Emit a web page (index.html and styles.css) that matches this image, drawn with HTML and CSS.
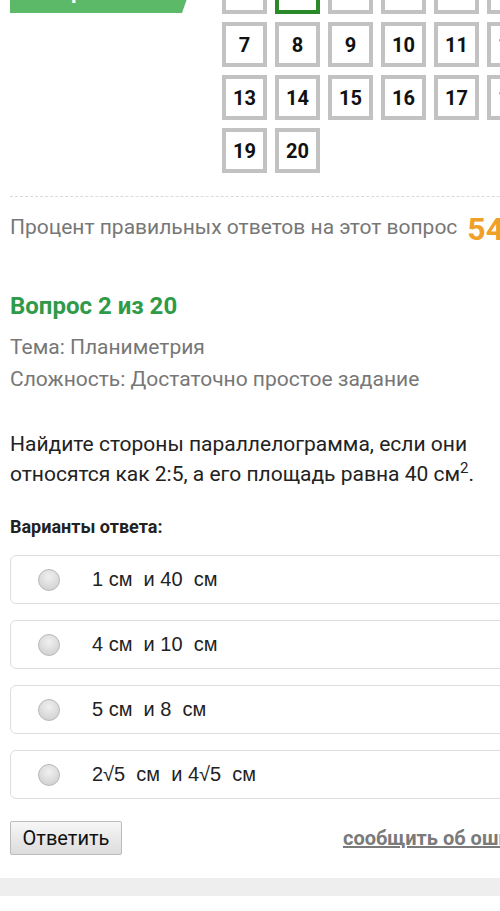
FILE: index.html
```html
<!DOCTYPE html>
<html lang="ru">
<head>
<meta charset="utf-8">
<link rel="stylesheet" href="styles.css">
</head>
<body>
<div class="page">
  <div class="top">
    <div class="banner"><span>Вопросы:</span></div>
    <div class="grid">
      <div class="cell">1</div><div class="cell current">2</div><div class="cell">3</div><div class="cell">4</div><div class="cell">5</div><div class="cell">6</div>
      <div class="cell">7</div><div class="cell">8</div><div class="cell">9</div><div class="cell">10</div><div class="cell">11</div><div class="cell">12</div>
      <div class="cell">13</div><div class="cell">14</div><div class="cell">15</div><div class="cell">16</div><div class="cell">17</div><div class="cell">18</div>
      <div class="cell">19</div><div class="cell">20</div>
    </div>
  </div>
  <div class="percent-row">
    <span class="percent-label">Процент правильных ответов на этот вопрос</span>
    <span class="percent-value">54%</span>
  </div>
  <h2 class="q-title">Вопрос 2 из 20</h2>
  <div class="meta first">Тема: Планиметрия</div>
  <div class="meta">Сложность: Достаточно простое задание</div>
  <p class="q-text">Найдите стороны параллелограмма, если они относятся как 2:5, а его площадь равна 40 см<sup>2</sup>.</p>
  <div class="variants-label">Варианты ответа:</div>
  <div class="options">
    <label class="option"><span class="radio"></span><span class="opt-text">1&nbsp;см&nbsp; и&nbsp;40&nbsp; см</span></label>
    <label class="option"><span class="radio"></span><span class="opt-text">4&nbsp;см&nbsp; и&nbsp;10&nbsp; см</span></label>
    <label class="option"><span class="radio"></span><span class="opt-text">5&nbsp;см&nbsp; и&nbsp;8&nbsp; см</span></label>
    <label class="option"><span class="radio"></span><span class="opt-text">2√5&nbsp; см&nbsp; и&nbsp;4√5&nbsp; см</span></label>
  </div>
  <div class="actions">
    <button class="answer-btn">Ответить</button>
    <a class="report" href="#">сообщить об ошибке</a>
  </div>
  <div class="footer-band"></div>
</div>
</body>
</html>
```
FILE: styles.css
```css
html, body {
  margin: 0;
  padding: 0;
  background: #fff;
  overflow: hidden;
  width: 500px;
  height: 911px;
}
body {
  font-family: Roboto, "Noto Sans", sans-serif;
  color: #222;
}
.page {
  width: 600px;
}
.top {
  display: flex;
  align-items: flex-start;
  margin-top: -31px;
  padding-left: 10px;
}
.banner {
  width: 186px;
  height: 40px;
  margin-top: 4px;
  padding: 7px 0 0 22px;
  box-sizing: border-box;
  background: #5bb968;
  clip-path: polygon(0 0, 100% 0, 172px 100%, 0 100%);
  color: #fff;
  font-weight: bold;
  font-size: 22px;
  line-height: 22px;
}
.grid {
  margin-left: 26px;
  display: grid;
  grid-template-columns: repeat(6, 45px);
  grid-auto-rows: 45px;
  gap: 8px;
}
.cell {
  box-sizing: border-box;
  border: 4px solid #c2c2c2;
  background: #fff;
  display: flex;
  align-items: center;
  justify-content: center;
  font-weight: bold;
  font-size: 20px;
  color: #111;
}
.cell.current {
  border-color: #2a8a2a;
}
.percent-row {
  margin: 23px 0 0 10px;
  border-top: 1px dashed #dadada;
  padding-top: 18px;
  display: flex;
  align-items: flex-start;
  white-space: nowrap;
}
.percent-label {
  color: #777;
  font-size: 21px;
  line-height: 24px;
}
.percent-value {
  color: #f0a028;
  font-weight: bold;
  font-size: 32px;
  line-height: 36px;
  margin: -4px 0 0 10px;
}
.q-title {
  margin: 45px 0 0 10px;
  color: #2f9a48;
  font-size: 24px;
  font-weight: bold;
  line-height: 28px;
}
.meta {
  margin-left: 10px;
  color: #777;
  font-size: 21px;
  line-height: 32px;
}
.meta.first {
  margin-top: 11px;
}
.q-text {
  margin: 34px 0 0 10px;
  width: 485px;
  font-size: 21px;
  line-height: 30px;
  color: #222;
}
.q-text sup {
  font-size: 15px;
  line-height: 0;
}
.variants-label {
  margin: 27px 0 0 10px;
  font-weight: bold;
  font-size: 18px;
  line-height: 22px;
  color: #222;
}
.options {
  margin: 17px 0 0 10px;
  display: flex;
  flex-direction: column;
  gap: 16px;
}
.option {
  display: flex;
  align-items: center;
  height: 49px;
  box-sizing: border-box;
  border: 1px solid #dedede;
  border-radius: 6px;
  background: #fff;
  width: 560px;
}
.radio {
  width: 22px;
  height: 22px;
  border-radius: 50%;
  margin-left: 27px;
  box-sizing: border-box;
  border: 1px solid #b8b8b8;
  background: radial-gradient(circle at 50% 35%, #f0f0f0 0%, #d6d6d6 70%, #cccccc 100%);
}
.opt-text {
  margin-left: 32px;
  font-family: "Liberation Sans", Arial, sans-serif;
  font-size: 20px;
  color: #222;
}
.actions {
  margin: 22px 0 0 10px;
  display: flex;
  align-items: center;
  white-space: nowrap;
}
.answer-btn {
  font-family: Roboto, sans-serif;
  font-size: 20px;
  color: #111;
  width: 112px;
  height: 34px;
  border: 1px solid #bbb;
  border-radius: 2px;
  background: linear-gradient(#f7f7f7, #dcdcdc);
  padding: 0;
}
.report {
  margin-left: 221px;
  color: #7a7a7a;
  font-weight: bold;
  font-size: 20px;
  text-decoration: underline;
}
.footer-band {
  margin-top: 23px;
  height: 18px;
  background: #eeeeee;
}
```
